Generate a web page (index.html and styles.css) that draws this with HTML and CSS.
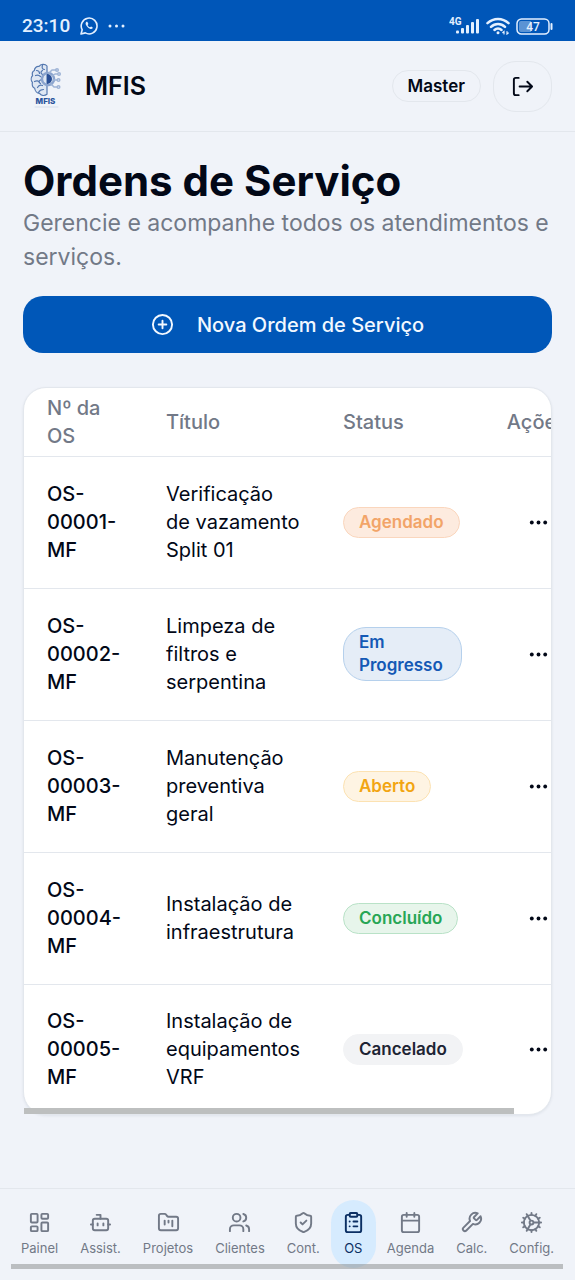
FILE: index.html
```html
<!DOCTYPE html>
<html lang="pt-BR">
<head>
<meta charset="utf-8">
<meta name="viewport" content="width=device-width, initial-scale=1">
<title>MFIS - Ordens de Serviço</title>
<link rel="stylesheet" href="styles.css">
</head>
<body>
<div class="statusbar">
  <div class="status-left">
    <span class="clock">23:10</span>
    <svg class="wa" viewBox="0 0 18 18" fill="none" stroke="currentColor" stroke-width="1.6" stroke-linejoin="round"><path d="M1 17l1.200-4.200A7.900 7.900 0 1 1 5.300 15.900z"/><path d="M6 5.200c-1.100 1.200.2 3.500 1.700 5s3.600 2.400 4.700 1.400c.5-.6.4-1.100 0-1.400l-1.300-.8-1.100.9c-1.100-.5-2-1.400-2.400-2.400l.8-.9-.8-1.800c-.4-.6-1.200-.4-1.600 0z" fill="currentColor" stroke="none"/></svg>
    <svg class="more" viewBox="0 0 17 4" fill="currentColor"><circle cx="2" cy="2" r="1.500"/><circle cx="8.500" cy="2" r="1.500"/><circle cx="15" cy="2" r="1.500"/></svg>
  </div>
  <div class="status-right">
    <svg class="signal" viewBox="0 0 31 18" fill="currentColor"><text class="net" x="0" y="8">4G</text><rect x="7" y="13.500" width="3" height="3" rx="1"/><rect x="12" y="11" width="3" height="5.500" rx="1"/><rect x="17" y="8" width="3" height="8.500" rx="1"/><rect x="22" y="5" width="3" height="11.500" rx="1"/><rect x="27" y="2" width="3" height="14.500" rx="1"/></svg>
    <svg class="wifi" viewBox="0 0 24 18" fill="none" stroke="currentColor" stroke-width="2.500" stroke-linecap="round"><path d="M1.500 6.200c6-5.600 15-5.600 21 0M5 9.800c4-3.800 10-3.800 14 0M8.500 13c2-1.900 5-1.900 7 0"/><circle cx="12" cy="15.800" r="1.500" fill="currentColor" stroke="none"/><path stroke-width="1.200" d="M18 17v-2.500l-1.200 1M21 14.500V17l1.300-1"/></svg>
    <svg class="battery" viewBox="0 0 37 17"><rect x="1" y="1" width="32" height="15" rx="4.500" fill="none" stroke="currentColor" stroke-width="1.500"/><path d="M5 3h10v11H5a2 2 0 0 1-2-2V5a2 2 0 0 1 2-2z" fill="currentColor" opacity=".4"/><path d="M35.500 6v5" stroke="currentColor" stroke-width="2" stroke-linecap="round"/><text class="pct" x="17" y="13" text-anchor="middle">47</text></svg>
  </div>
</div>

<header class="topbar">
  <a class="brand" href="#">
    <svg class="logo" viewBox="0 0 46 46" fill="none" stroke="#5478b0" stroke-width="1.200" stroke-linecap="round" stroke-linejoin="round">
      <path fill="#dfe7f3" d="M24 3c-2-2.500-6.500-2-8 .5-2.600-.3-4.600 1.500-4.600 4-2 1-2.500 3-1.800 5-1.800 2-1.800 5-.2 6.800-.7 3 .5 5 2.300 6 .3 3 2.500 5 4.800 5 1.500 2 4.500 3 7.500 1z"/>
      <path d="M13.500 7.500c2 0 3 1 3 3m3-8c-1 2 0 4 2 4m-9 6c2-1 4 0 5 1m-6 5c2-1 4-1 5 1m-2 5c1-2 3-3 5-2m-4 7c1-2 2-3 5-3m-1-19c-2 1-2 3 0 4m-1 5c-3 1-3 3-1 4"/>
      <circle cx="25" cy="16" r="6" stroke="#8ba4ce" stroke-width="2.500" stroke-dasharray="2.500 1.300"/>
      <path d="M24 11a5 5 0 0 1 0 10z" fill="#294f96" stroke="none"/>
      <g stroke="#9fb4d6" stroke-width="1.500"><path d="M26 10l3-3h4M29 13l3-2h2M30 17h4M28 21l3 3h3"/><circle cx="34" cy="7" r="1.300"/><circle cx="36" cy="11" r="1.300"/><circle cx="35.500" cy="17" r="1.300"/><circle cx="35.500" cy="24" r="1.300"/></g>
      <text class="logo-text" x="22.500" y="41" text-anchor="middle">MFIS</text>
      <path d="M12 44h23" stroke="#d5deeb" stroke-width="1"/>
    </svg>
    <span>MFIS</span>
  </a>
  <div class="account">
    <span class="role">Master</span>
    <button class="logout" type="button" aria-label="Sair">
      <svg viewBox="0 0 24 24" fill="none" stroke="currentColor" stroke-width="2" stroke-linecap="round" stroke-linejoin="round"><path d="M8 3H5a2 2 0 0 0-2 2v14a2 2 0 0 0 2 2h3M17 17l5-5-5-5M22 12H9"/></svg>
    </button>
  </div>
</header>

<main class="content">
  <div class="heading">
    <h1>Ordens de Serviço</h1>
    <p>Gerencie e acompanhe todos os atendimentos e serviços.</p>
  </div>
  <button class="primary" type="button">
    <svg viewBox="0 0 24 24" fill="none" stroke="currentColor" stroke-width="2" stroke-linecap="round"><circle cx="12" cy="12" r="10"/><path d="M8 12h8M12 8v8"/></svg>
    <span>Nova Ordem de Serviço</span>
  </button>

  <section class="card">
    <div class="table-scroll">
      <table>
        <colgroup><col class="c-id"><col class="c-title"><col class="c-status"><col class="c-actions"></colgroup>
        <thead><tr><th>Nº da OS</th><th>Título</th><th>Status</th><th class="actions">Ações</th></tr></thead>
        <tbody>
          <tr><td class="id">OS-00001-MF</td><td class="title">Verificação de vazamento Split 01</td><td><span class="badge scheduled">Agendado</span></td><td class="actions"><button class="row-menu" type="button" aria-label="Abrir menu"><svg viewBox="0 0 24 24" fill="currentColor"><circle cx="5" cy="12" r="2"/><circle cx="12" cy="12" r="2"/><circle cx="19" cy="12" r="2"/></svg></button></td></tr>
          <tr><td class="id">OS-00002-MF</td><td class="title">Limpeza de filtros e serpentina</td><td><span class="badge progress">Em Progresso</span></td><td class="actions"><button class="row-menu" type="button" aria-label="Abrir menu"><svg viewBox="0 0 24 24" fill="currentColor"><circle cx="5" cy="12" r="2"/><circle cx="12" cy="12" r="2"/><circle cx="19" cy="12" r="2"/></svg></button></td></tr>
          <tr><td class="id">OS-00003-MF</td><td class="title">Manutenção preventiva geral</td><td><span class="badge open">Aberto</span></td><td class="actions"><button class="row-menu" type="button" aria-label="Abrir menu"><svg viewBox="0 0 24 24" fill="currentColor"><circle cx="5" cy="12" r="2"/><circle cx="12" cy="12" r="2"/><circle cx="19" cy="12" r="2"/></svg></button></td></tr>
          <tr><td class="id">OS-00004-MF</td><td class="title">Instalação de infraestrutura</td><td><span class="badge done">Concluído</span></td><td class="actions"><button class="row-menu" type="button" aria-label="Abrir menu"><svg viewBox="0 0 24 24" fill="currentColor"><circle cx="5" cy="12" r="2"/><circle cx="12" cy="12" r="2"/><circle cx="19" cy="12" r="2"/></svg></button></td></tr>
          <tr><td class="id">OS-00005-MF</td><td class="title">Instalação de equipamentos VRF</td><td><span class="badge cancelled">Cancelado</span></td><td class="actions"><button class="row-menu" type="button" aria-label="Abrir menu"><svg viewBox="0 0 24 24" fill="currentColor"><circle cx="5" cy="12" r="2"/><circle cx="12" cy="12" r="2"/><circle cx="19" cy="12" r="2"/></svg></button></td></tr>
        </tbody>
      </table>
    </div>
  </section>
</main>

<nav class="tabs">
  <a href="#"><svg viewBox="0 0 24 24"><rect x="3" y="3" width="7" height="9" rx="1"/><rect x="14" y="3" width="7" height="5" rx="1"/><rect x="14" y="12" width="7" height="9" rx="1"/><rect x="3" y="16" width="7" height="5" rx="1"/></svg><span>Painel</span></a>
  <a href="#"><svg viewBox="0 0 24 24"><path d="M12 8V4H8"/><rect x="4" y="8" width="16" height="12" rx="2"/><path d="M2 14h2M20 14h2M15 13v2M9 13v2"/></svg><span>Assist.</span></a>
  <a href="#"><svg viewBox="0 0 24 24"><path d="M4 20h16a2 2 0 0 0 2-2V8a2 2 0 0 0-2-2h-7.930a2 2 0 0 1-1.660-.9l-.82-1.200A2 2 0 0 0 7.930 3H4a2 2 0 0 0-2 2v13c0 1.100.9 2 2 2z"/><path d="M8 10v4M12 10v2M16 10v6"/></svg><span>Projetos</span></a>
  <a href="#"><svg viewBox="0 0 24 24"><path d="M16 21v-2a4 4 0 0 0-4-4H6a4 4 0 0 0-4 4v2"/><circle cx="9" cy="7" r="4"/><path d="M22 21v-2a4 4 0 0 0-3-3.870M16 3.130a4 4 0 0 1 0 7.750"/></svg><span>Clientes</span></a>
  <a href="#"><svg viewBox="0 0 24 24"><path d="M20 13c0 5-3.500 7.500-7.660 8.950a1 1 0 0 1-.67-.01C7.500 20.500 4 18 4 13V6a1 1 0 0 1 1-1c2 0 4.500-1.200 6.240-2.720a1.170 1.170 0 0 1 1.520 0C14.510 3.810 17 5 19 5a1 1 0 0 1 1 1z"/><path d="m9 12 2 2 4-4"/></svg><span>Cont.</span></a>
  <a class="active" href="#" aria-current="page"><svg viewBox="0 0 24 24"><rect x="8" y="2" width="8" height="4" rx="1"/><path d="M16 4h2a2 2 0 0 1 2 2v14a2 2 0 0 1-2 2H6a2 2 0 0 1-2-2V6a2 2 0 0 1 2-2h2M12 11h4M12 16h4M8 11h.01M8 16h.01"/></svg><span>OS</span></a>
  <a href="#"><svg viewBox="0 0 24 24"><path d="M8 2v4M16 2v4M3 10h18"/><rect x="3" y="4" width="18" height="18" rx="2"/></svg><span>Agenda</span></a>
  <a href="#"><svg viewBox="0 0 24 24"><path d="M14.700 6.300a1 1 0 0 0 0 1.400l1.600 1.600a1 1 0 0 0 1.400 0l3.770-3.770a6 6 0 0 1-7.940 7.940l-6.910 6.910a2.120 2.120 0 0 1-3-3l6.910-6.910a6 6 0 0 1 7.940-7.940l-3.760 3.760z"/></svg><span>Calc.</span></a>
  <a href="#"><svg viewBox="0 0 24 24"><path d="M12 20a8 8 0 1 0 0-16 8 8 0 0 0 0 16z"/><path d="M12 14a2 2 0 1 0 0-4 2 2 0 0 0 0 4zM12 2v2M12 22v-2M17 20.660l-1-1.730M11 10.270 7 3.340M20.660 17l-1.730-1M3.340 7l1.730 1M14 12h8M2 12h2M20.660 7l-1.730 1M3.340 17l1.730-1M17 3.340l-1 1.730M11 13.730l-4 6.930"/></svg><span>Config.</span></a>
</nav>
</body>
</html>
```
FILE: styles.css
```css
* { box-sizing: border-box; }

body {
  margin: 0;
  min-height: 100vh;
  display: flex;
  flex-direction: column;
  background: #f0f3f9;
  color: #020817;
  font-family: Inter, "Liberation Sans", sans-serif;
  font-size: 20px;
  line-height: 28px;
}

button { font: inherit; cursor: pointer; }
a { color: inherit; text-decoration: none; }
svg { display: block; flex: none; }

/* Device status bar */
.statusbar {
  display: flex;
  justify-content: space-between;
  align-items: flex-end;
  height: 41px;
  padding: 0 22px 5px;
  background: #0056b8;
  color: #e4f0ff;
}
.status-left, .status-right { display: flex; align-items: center; gap: 6px; height: 20px; }
.status-left { gap: 10px; }
.clock { font-family: Roboto, sans-serif; font-size: 19px; font-weight: 500; }
.wa { width: 18px; height: 18px; }
.more { width: 17px; height: 4px; }
.signal { width: 31px; height: 18px; }
.wifi { width: 24px; height: 18px; }
.battery { width: 37px; height: 17px; }
.net { font: 700 10px Roboto, sans-serif; }
.pct { font: 500 12px Roboto, sans-serif; fill: currentColor; }

/* App header */
.topbar {
  display: flex;
  justify-content: space-between;
  align-items: center;
  height: 91px;
  padding: 0 23px;
  border-bottom: 1px solid #e3e7ed;
}
.brand { display: flex; align-items: center; gap: 16px; font-size: 25px; font-weight: 600; }
.logo { width: 46px; height: 46px; }
.logo-text { font: 800 8px Inter, sans-serif; fill: #2a539c; stroke: none; }
.account { display: flex; align-items: center; gap: 12px; }
.role {
  padding: 3px 15px;
  border: 1px solid #e3e7ed;
  border-radius: 16px;
  font-size: 17px;
  font-weight: 600;
  line-height: 24px;
}
.logout {
  display: grid;
  place-items: center;
  width: 59px;
  height: 51px;
  padding: 0;
  border: 1px solid #e3e7ed;
  border-radius: 23px;
  background: none;
  color: inherit;
}
.logout svg { width: 23px; height: 23px; }

/* Page content */
.content { flex: 1; padding: 23px 23px 60px; }
h1 { margin: 0; font-size: 42px; font-weight: 700; line-height: 51px; }
.heading p { margin: 0; color: #727987; font-size: 23px; line-height: 34px; }
.primary {
  display: flex;
  align-items: center;
  justify-content: center;
  gap: 23px;
  width: 100%;
  height: 57px;
  margin: 22px 0 34px;
  border: 0;
  border-radius: 20px;
  background: #0057b8;
  color: #f2f8ff;
  font-weight: 500;
}
.primary svg { width: 23px; height: 23px; }

/* Orders table */
.card {
  position: relative;
  border: 1px solid #e3e7ed;
  border-radius: 23px;
  background: #fff;
  box-shadow: 0 1px 3px #10204014;
}
.card::after {
  content: "";
  position: absolute;
  left: 0;
  bottom: 0;
  width: 93%;
  height: 6px;
  background: #bdbfbf;
}
.table-scroll { overflow-x: auto; scrollbar-width: none; border-radius: 22px; }
table { width: 566px; table-layout: fixed; border-collapse: collapse; }
.c-id { width: 119px; }
.c-title { width: 177px; }
.c-status { width: 165px; }
.c-actions { width: 105px; }
th, td { padding: 0 23px; text-align: left; vertical-align: middle; }
th { height: 68px; color: #727987; font-weight: 500; }
td { height: 132px; }
tr { border-bottom: 1px solid #e3e7ed; }
tbody tr:last-child { border-bottom: 0; }
tbody tr:last-child td { height: 130px; }
.id { font-weight: 500; }
.title { padding-right: 20px; }
.actions { padding-left: 0; text-align: right; }
.row-menu {
  display: grid;
  place-items: center;
  width: 57px;
  height: 57px;
  margin-left: auto;
  padding: 0;
  border: 0;
  border-radius: 20px;
  background: none;
  color: inherit;
}
.row-menu svg { width: 23px; height: 23px; }
.badge {
  display: inline-block;
  vertical-align: middle;
  padding: 3px 15px;
  border: 1px solid;
  border-radius: 23px;
  font-size: 17px;
  font-weight: 600;
  line-height: 23px;
}
.scheduled { color: #f2a468; background: #fdebdf; border-color: #fad6bd; }
.progress { color: #1459b5; background: #e5edf7; border-color: #b5d0ec; }
.open { color: #f2a512; background: #fef4e3; border-color: #fce2b2; }
.done { color: #27a655; background: #e7f5eb; border-color: #b9e2c7; }
.cancelled { color: #1d2433; background: #f2f3f5; border-color: #f2f3f5; }

/* Bottom navigation */
.tabs {
  position: sticky;
  bottom: 0;
  display: flex;
  justify-content: center;
  height: 92px;
  padding: 11px;
  border-top: 1px solid #e3e7ed;
  background: #f0f3f9;
  color: #727987;
}
.tabs::after {
  content: "";
  position: absolute;
  left: 11px;
  right: 12px;
  bottom: 11px;
  height: 5px;
  background: #868a8a80;
}
.tabs a {
  display: flex;
  flex-direction: column;
  align-items: center;
  gap: 5px;
  height: 68px;
  padding: 11px 11px 0;
  border-radius: 23px;
  font-size: 13px;
  line-height: 19px;
}
.tabs svg {
  width: 23px;
  height: 23px;
  fill: none;
  stroke: currentColor;
  stroke-width: 2;
  stroke-linecap: round;
  stroke-linejoin: round;
}
.tabs .active { background: #d6ebfe; color: #0b2f63; }
```
